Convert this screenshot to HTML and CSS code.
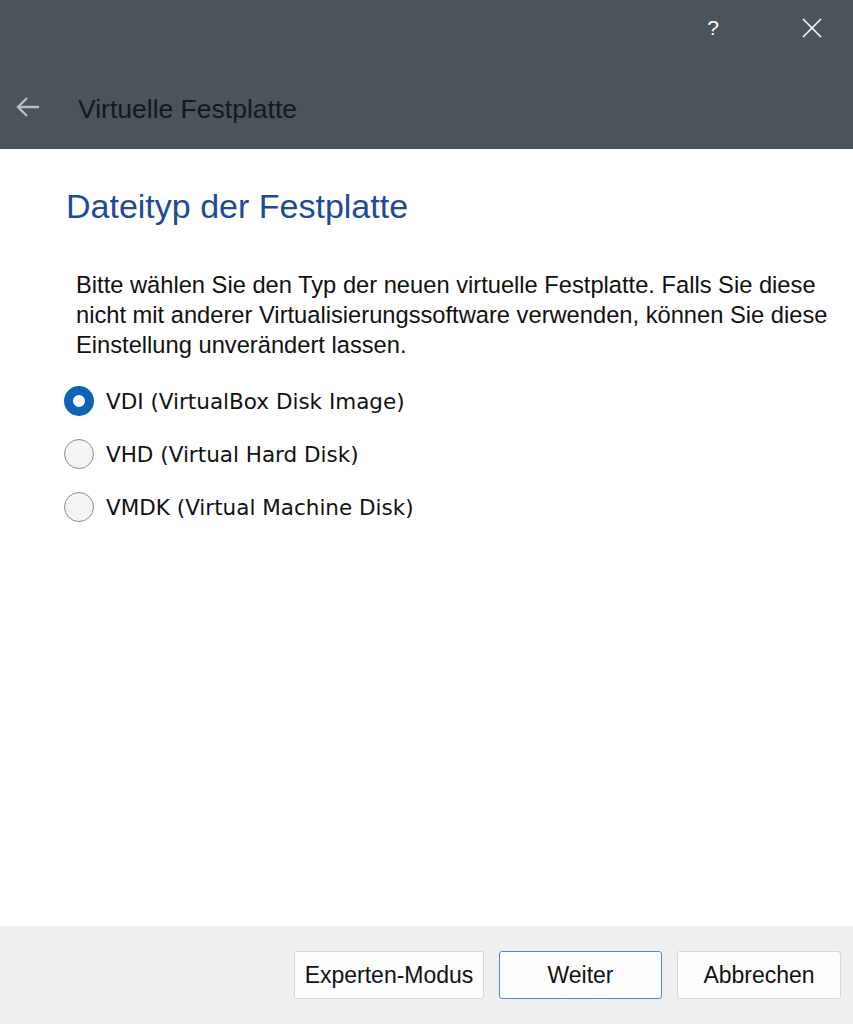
FILE: index.html
```html
<!DOCTYPE html>
<html lang="de">
<head>
    <meta charset="UTF-8">
    <title>Virtuelle Festplatte</title>
    <link rel="stylesheet" href="styles.css">
</head>
<body>
    <div class="window">
        <div class="titlebar">
            <div class="caption-buttons">
                <span class="help">?</span>
                <svg class="close" width="20" height="20" viewBox="0 0 20 20">
                    <path d="M1 1 L19 19 M19 1 L1 19" stroke="#ffffff" stroke-width="1.6" fill="none"/>
                </svg>
            </div>
            <div class="nav">
                <svg class="back" width="24" height="20" viewBox="0 0 24 20">
                    <path d="M2 10 H23 M11 1 L2 10 L11 19" stroke="#b9bdc1" stroke-width="2.4" fill="none"/>
                </svg>
                <span class="nav-title">Virtuelle Festplatte</span>
            </div>
        </div>

        <div class="content">
            <h1>Dateityp der Festplatte</h1>
            <p class="info">Bitte wählen Sie den Typ der neuen virtuelle Festplatte. Falls Sie diese nicht mit anderer Virtualisierungssoftware verwenden, können Sie diese Einstellung unverändert lassen.</p>
            <div class="options">
                <label class="option"><span class="radio checked"></span>VDI (VirtualBox Disk Image)</label>
                <label class="option"><span class="radio"></span>VHD (Virtual Hard Disk)</label>
                <label class="option"><span class="radio"></span>VMDK (Virtual Machine Disk)</label>
            </div>
        </div>

        <div class="footer">
            <button class="btn expert">Experten-Modus</button>
            <button class="btn default">Weiter</button>
            <button class="btn cancel">Abbrechen</button>
        </div>
    </div>
</body>
</html>
```

FILE: styles.css
```css
body {
    margin: 0;
    padding: 0;
    font-family: "Liberation Sans", Arial, sans-serif;
    background-color: #ffffff;
}
.window {
    display: flex;
    flex-direction: column;
    height: 1024px;
}
.titlebar {
    height: 149px;
    background-color: #4b535b;
    display: flex;
    flex-direction: column;
}
.caption-buttons {
    display: flex;
    justify-content: flex-end;
    align-items: center;
    height: 56px;
    padding-right: 31px;
}
.help {
    color: #ffffff;
    font-size: 21px;
    margin-right: 83px;
}
.nav {
    flex: 1;
    display: flex;
    align-items: center;
    padding: 14px 0 0 16px;
}
.back {
    margin-right: 38px;
    margin-bottom: 6px;
}
.nav-title {
    font-size: 26.5px;
    color: #15191d;
}
.content {
    flex: 1;
    padding: 0 12px 0 66px;
}
h1 {
    font-size: 34px;
    line-height: 40px;
    font-weight: normal;
    color: #1f4a96;
    margin: 37px 0 44px 0;
}
.info {
    font-size: 23.7px;
    line-height: 30px;
    color: #111111;
    margin: 0 0 26px 10px;
}
.options {
    display: flex;
    flex-direction: column;
    gap: 23px;
}
.option {
    display: flex;
    align-items: center;
    height: 30px;
    font-family: "DejaVu Sans", sans-serif;
    font-size: 21.5px;
    color: #111111;
    margin-left: -2px;
}
.radio {
    box-sizing: border-box;
    width: 30px;
    height: 30px;
    border-radius: 50%;
    border: 1.5px solid #8c8c8c;
    background-color: #f4f4f4;
    margin-right: 12px;
}
.radio.checked {
    border: 9px solid #0f63b5;
    background-color: #ffffff;
}
.footer {
    height: 98px;
    background-color: #efefef;
    display: flex;
    justify-content: flex-end;
    align-items: center;
    gap: 15px;
    padding-right: 12px;
}
.btn {
    height: 48px;
    background-color: #fdfdfd;
    border: 1px solid #d6d6d6;
    border-radius: 3px;
    font-family: "Liberation Sans", Arial, sans-serif;
    font-size: 23px;
    color: #111111;
}
.expert {
    width: 190px;
}
.default {
    width: 163px;
    border-color: #4f8cc2;
}
.cancel {
    width: 164px;
}
```
